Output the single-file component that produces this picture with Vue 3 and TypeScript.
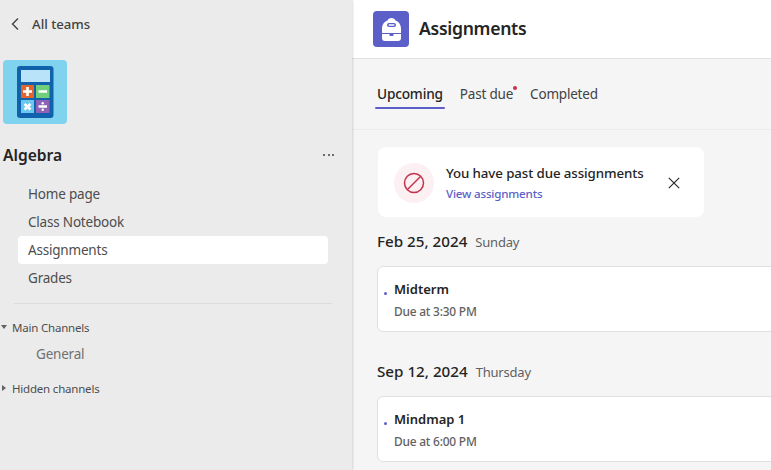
<script setup lang="ts">
const navItems = [
  { label: 'Home page', active: false },
  { label: 'Class Notebook', active: false },
  { label: 'Assignments', active: true },
  { label: 'Grades', active: false },
]
const groups = [
  { date: 'Feb 25, 2024', day: 'Sunday', title: 'Midterm', due: 'Due at 3:30 PM' },
  { date: 'Sep 12, 2024', day: 'Thursday', title: 'Mindmap 1', due: 'Due at 6:00 PM' },
]
</script>

<template>
  <div class="app">
    <aside class="sidebar">
      <div class="back">
        <svg class="chev" width="10" height="14" viewBox="0 0 10 14"><path d="M8 1.500 2.500 7 8 12.500" fill="none" stroke="#424242" stroke-width="1.400" /></svg>
        <span>All teams</span>
      </div>
      <div class="tile">
        <svg width="64" height="64" viewBox="0 0 64 64">
          <rect x="14" y="6" width="36.500" height="52" rx="3" fill="#0f62ab" />
          <rect x="18" y="10" width="29" height="12" fill="#b9e3f8" />
          <rect x="18" y="25" width="13" height="13" fill="#e2662c" />
          <rect x="33" y="25" width="13.500" height="13" fill="#70cf7b" />
          <rect x="18" y="40" width="13" height="13" fill="#6cc8ee" />
          <rect x="33" y="40" width="13.500" height="13" fill="#8e62b4" />
          <path d="M24.500 27v9M20 31.500h9M35.500 31.500h8.500M21.500 44l6 5.500M27.500 44l-6 5.500M35.500 46.500h8.500" stroke="#fff" stroke-width="2.600" fill="none" />
          <circle cx="39.700" cy="43.200" r="1.200" fill="#fff" />
          <circle cx="39.700" cy="49.800" r="1.200" fill="#fff" />
        </svg>
      </div>
      <div class="team-row">
        <span class="team-name">Algebra</span>
        <span class="dots"><i></i><i></i><i></i></span>
      </div>
      <nav class="nav">
        <div v-for="item in navItems" :key="item.label" class="nav-item" :class="{ active: item.active }">{{ item.label }}</div>
      </nav>
      <div class="divider"></div>
      <div class="channel-head first"><span class="tri down"></span>Main Channels</div>
      <div class="channel">General</div>
      <div class="channel-head hidden-ch"><span class="tri right"></span>Hidden channels</div>
    </aside>
    <main class="main">
      <header class="header">
        <div class="app-icon">
          <svg width="36" height="36" viewBox="0 0 36 36">
            <path d="M18.500 7c-2 0-3.500 1-4 2.600C11.200 10.700 9 14 9 18v4h19v-4c0-4-2.200-7.300-5.500-8.400C22 8 20.500 7 18.500 7Z" fill="#fff" />
            <rect x="14" y="12" width="9" height="4" rx="2" fill="#5b5fc7" />
            <rect x="15.500" y="13.300" width="6" height="1.400" rx=".7" fill="#fff" />
            <path d="M9 23h7.500v1c0 .6.400 1 1 1h2c.6 0 1-.4 1-1v-1H28v4a3 3 0 0 1-3 3H12a3 3 0 0 1-3-3Z" fill="#fff" />
          </svg>
        </div>
        <h1>Assignments</h1>
      </header>
      <div class="tabs">
        <div class="tab selected">Upcoming</div>
        <div class="tab due">Past due<span class="red-dot"></span></div>
        <div class="tab done">Completed</div>
      </div>
      <section class="content">
        <div class="banner">
          <div class="ban-circle">
            <svg width="22" height="22" viewBox="0 0 22 22"><circle cx="11" cy="11" r="9.500" fill="none" stroke="#c4314b" stroke-width="1.500" /><path d="M4.500 17.500 17.500 4.500" stroke="#c4314b" stroke-width="1.500" /></svg>
          </div>
          <div class="ban-text">
            <div class="ban-title">You have past due assignments</div>
            <div class="ban-link">View assignments</div>
          </div>
          <svg class="close" width="12" height="12" viewBox="0 0 12 12"><path d="M.8.800l10.400 10.400M11.200.800.800 11.200" stroke="#242424" stroke-width="1.100" /></svg>
        </div>
        <div v-for="g in groups" :key="g.date" class="group">
          <div class="date-row"><span class="date">{{ g.date }}</span><span class="day">{{ g.day }}</span></div>
          <div class="card">
            <span class="bullet"></span>
            <div>
              <div class="card-title">{{ g.title }}</div>
              <div class="card-due">{{ g.due }}</div>
            </div>
          </div>
        </div>
      </section>
    </main>
  </div>
</template>

<style>
html, body { margin: 0; overflow: hidden; }
</style>

<style scoped>
.app { width: 771px; height: 470px; display: flex; overflow: hidden; font-family: "Noto Sans", sans-serif; color: #242424; letter-spacing: -0.2px; }
.sidebar { width: 352px; height: 470px; flex: none; background: #ebebeb; box-shadow: 1px 0 2px rgba(0,0,0,.14); position: relative; z-index: 1; box-sizing: border-box; }
.back { height: 48px; display: flex; align-items: center; gap: 12px; padding-left: 10px; font-size: 13.200px; font-weight: 500; color: #424242; letter-spacing: 0; }
.tile { width: 64px; height: 64px; margin: 12px 0 0 3px; background: #7fd3ee; border-radius: 4px; }
.team-row { height: 28px; margin-top: 17px; display: flex; align-items: center; justify-content: space-between; padding: 0 18px 0 3px; }
.team-name { font-size: 15.600px; font-weight: 600; letter-spacing: 0; }
.dots { display: flex; gap: 2.500px; }
.dots i { width: 2px; height: 2px; border-radius: 50%; background: #424242; }
.nav { margin: 11px 24px 0 18px; }
.nav-item { height: 28px; line-height: 28px; padding-left: 10px; font-size: 13.500px; color: #4d4d4d; border-radius: 4px; }
.nav-item.active { background: #fff; }
.divider { height: 1px; margin: 11px 20px 0 14px; background: #dcdcdc; }
.channel-head { display: flex; align-items: center; font-size: 11.500px; color: #4d4d4d; height: 16px; padding-left: 1px; }
.channel-head.first { margin-top: 15px; }
.channel-head.hidden-ch { margin-top: 16px; }
.tri { width: 0; height: 0; margin-right: 5px; display: block; }
.tri.down { border-left: 3.500px solid transparent; border-right: 3.500px solid transparent; border-top: 4px solid #616161; }
.tri.right { border-top: 3.500px solid transparent; border-bottom: 3.500px solid transparent; border-left: 4px solid #616161; margin-right: 6px; margin-left: 1px; }
.channel { height: 20px; line-height: 20px; margin-top: 9px; padding-left: 36px; font-size: 13.500px; color: #707070; }
.main { width: 419px; flex: none; background: #f5f5f5; }
.header { height: 58px; background: #fff; border-bottom: 1px solid #e0e0e0; display: flex; align-items: center; gap: 10px; padding-left: 21px; }
.app-icon { width: 36px; height: 36px; background: #5b5fc7; border-radius: 4px; display: flex; }
h1 { margin: 0 0 2px; font-size: 17.600px; font-weight: 600; color: #242424; letter-spacing: -0.3px; }
.tabs { border-bottom: 1px solid #ebebeb; display: flex; padding-left: 25px; box-sizing: border-box; height: 71px; }
.tab { position: relative; font-size: 13.500px; color: #424242; height: 50px; line-height: 70px; }
.tab.selected { font-weight: 500; font-size: 13.700px; color: #242424; }
.tab.selected::after { content: ""; position: absolute; left: -2px; right: -2px; bottom: 0; height: 2px; background: #5b5fc7; border-radius: 1px; }
.tab.due { margin-left: 17px; }
.tab.done { margin-left: 17px; }
.red-dot { position: absolute; right: -4px; top: 27px; width: 4px; height: 4px; border-radius: 50%; background: #c4314b; }
.content { padding: 17px 0 0 25px; }
.banner { width: 326px; height: 70px; margin-left: 1px; padding: 2px 0 0 16px; background: #fff; border-radius: 8px; display: flex; align-items: center; box-sizing: border-box; position: relative; }
.ban-circle { width: 40px; height: 40px; border-radius: 50%; background: #fcf0f3; display: flex; align-items: center; justify-content: center; flex: none; }
.ban-text { margin-left: 12px; margin-top: -1px; }
.ban-title { font-size: 13.300px; font-weight: 500; line-height: 20px; letter-spacing: -0.1px; }
.ban-link { font-size: 11.600px; font-weight: 500; color: #5b5fc7; line-height: 16px; margin-top: 3px; }
.close { margin-left: auto; margin-right: 24px; }
.date-row { display: flex; align-items: baseline; gap: 8px; height: 22px; line-height: 22px; }
.group { margin-bottom: 28px; padding-top: 13px; }
.group + .group { padding-top: 0; }
.date { font-size: 15.200px; font-weight: 500; letter-spacing: 0; }
.day { font-size: 13px; color: #616161; }
.card { width: 500px; height: 66px; margin-top: 14px; background: #fff; border: 1px solid #e0e0e0; border-radius: 6px; box-sizing: border-box; display: flex; padding-left: 16px; position: relative; }
.bullet { position: absolute; left: 6px; top: 25px; width: 3px; height: 3px; border-radius: 50%; background: #5b5fc7; }
.card-title { font-size: 13px; font-weight: 600; line-height: 18px; margin-top: 13px; letter-spacing: 0; }
.card-due { font-size: 11.900px; font-weight: 500; color: #616161; line-height: 16px; margin-top: 5px; }
</style>
